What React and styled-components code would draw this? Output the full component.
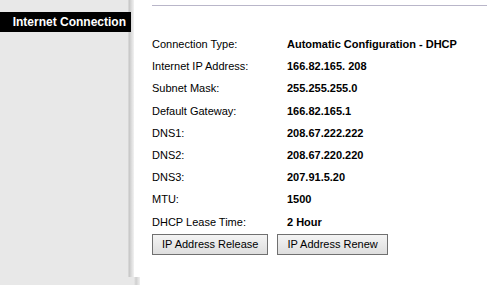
import React from "react"
import styled, { createGlobalStyle } from "styled-components"

const GlobalStyle = createGlobalStyle`
	html, body {
		margin: 0;
		padding: 0;
		background: #ffffff;
		font-family: "Liberation Sans", Arial, sans-serif;
	}
`

const rows = [
	["Connection Type:", "Automatic Configuration - DHCP"],
	["Internet IP Address:", "166.82.165. 208"],
	["Subnet Mask:", "255.255.255.0"],
	["Default Gateway:", "166.82.165.1"],
	["DNS1:", "208.67.222.222"],
	["DNS2:", "208.67.220.220"],
	["DNS3:", "207.91.5.20"],
	["MTU:", "1500"],
	["DHCP Lease Time:", "2 Hour"],
]

const App = () => {
	return (
		<Page>
			<GlobalStyle />
			<Sidebar>
				<SideTitle>Internet Connection</SideTitle>
				<SideFill />
				<SideFoot />
			</Sidebar>
			<Main>
				<Rule />
				<Table>
					{rows.map(([label, value]) => (
						<Row key={label}>
							<Label>{label}</Label>
							<Value>{value}</Value>
						</Row>
					))}
				</Table>
				<Buttons>
					<Button>IP Address Release</Button>
					<Button>IP Address Renew</Button>
				</Buttons>
			</Main>
		</Page>
	)
}

const Page = styled.div`
	width: 487px;
	height: 285px;
	display: flex;
	overflow: hidden;
`

const Sidebar = styled.div`
	width: 134px;
	flex-shrink: 0;
	display: flex;
	flex-direction: column;
	padding-top: 12px;
	background: linear-gradient(
		to right,
		#e8e8e8 0,
		#e8e8e8 128px,
		#c4c4c4 129px,
		#d8d8d8 131px,
		#f2f2f2 134px
	);
`

const SideTitle = styled.div`
	height: 20px;
	width: 131px;
	background: #000000;
	color: #ffffff;
	font-weight: bold;
	font-size: 12px;
	line-height: 20px;
	text-align: right;
	padding-right: 5px;
	box-sizing: border-box;
`

const SideFill = styled.div`
	flex: 1;
`

const SideFoot = styled.div`
	height: 8px;
	width: 140px;
	background: linear-gradient(to right, #e8e8e8 0, #e8e8e8 134px, #cfcfcf 136px, #f0f0f0 140px);
`

const Main = styled.div`
	flex: 1;
	padding-left: 18px;
	padding-top: 5px;
`

const Rule = styled.div`
	height: 1px;
	background: #b9b6c9;
	margin-bottom: 27px;
`

const Table = styled.div`
	display: flex;
	flex-direction: column;
`

const Row = styled.div`
	display: grid;
	grid-template-columns: 135px 1fr;
	height: 22.2px;
	align-items: center;
	font-size: 11px;
	color: #000000;
`

const Label = styled.span``

const Value = styled.span`
	font-weight: bold;
`

const Buttons = styled.div`
	display: flex;
	gap: 9px;
	margin-top: 1px;
`

const Button = styled.button`
	height: 21px;
	padding: 0 9px;
	font-family: "Liberation Sans", Arial, sans-serif;
	font-size: 11px;
	color: #000000;
	background: linear-gradient(#f4f4f4, #dedede);
	border: 1px solid #707070;
	border-radius: 0;
`

export default App
